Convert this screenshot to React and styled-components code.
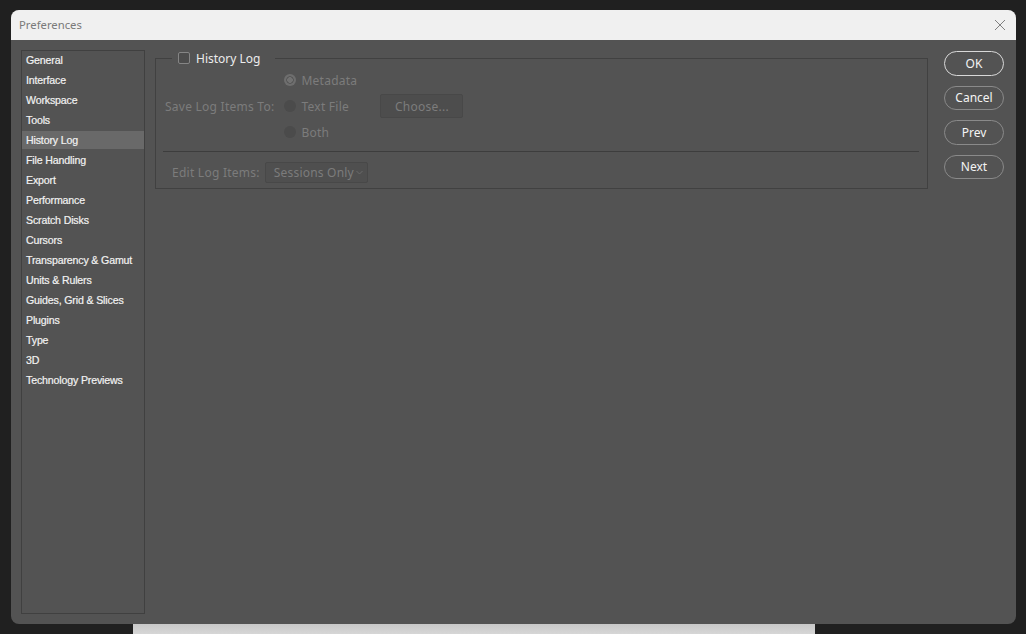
import React from "react";
import styled, { createGlobalStyle } from "styled-components";

const Global = createGlobalStyle`
  html, body { margin: 0; padding: 0; background: #202020; }
  body { font-family: "Noto Sans", "Liberation Sans", sans-serif; }
  * { box-sizing: border-box; }
`;

const Page = styled.div`
  width: 1026px;
  height: 634px;
  padding: 10px 0 0 11px;
  overflow: hidden;
  display: flex;
  flex-direction: column;
`;

const Window = styled.div`
  width: 1005px;
  height: 614px;
  flex: none;
  border-radius: 8px;
  overflow: hidden;
  background: #535353;
  display: flex;
  flex-direction: column;
  position: relative;
  z-index: 1;
`;

const Behind = styled.div`
  margin-left: 122px;
  width: 682px;
  height: 10px;
  flex: none;
  background: linear-gradient(#c8c8c8, #d6d6d6);
`;

const TitleBar = styled.div`
  height: 30px;
  flex: none;
  background: #f0f0f0;
  display: flex;
  align-items: center;
  justify-content: space-between;
  padding: 0 10px 1px 8px;
`;

const Title = styled.span`
  font-family: "Noto Sans", sans-serif;
  font-size: 11.3px;
  color: #7a7a7a;
`;

const Close = styled.svg`
  width: 12px;
  height: 12px;
`;

const Body = styled.div`
  flex: 1;
  display: flex;
  padding: 10px 12px 10px 10px;
`;

const Sidebar = styled.ul`
  list-style: none;
  margin: 0;
  padding: 0;
  width: 124px;
  flex: none;
  border: 1px solid #404040;
  display: flex;
  flex-direction: column;
  gap: 2px;
`;

const Item = styled.li`
  height: 18px;
  line-height: 18px;
  padding-left: 4px;
  font-family: "Liberation Sans", "DejaVu Sans", sans-serif;
  font-size: 10.6px;
  color: #f2f2f2;
  background: ${(p) => (p.$active ? "#696969" : "transparent")};
  letter-spacing: -0.15px;
  -webkit-text-stroke: 0.2px #f2f2f2;
`;

const Main = styled.div`
  flex: none;
  margin-left: 10px;
`;

const Group = styled.fieldset`
  margin: 0;
  width: 773px;
  height: 139px;
  border: 1px solid #414141;
  padding: 0;
  display: flex;
  flex-direction: column;
`;

const Legend = styled.legend`
  margin-left: 16px;
  padding: 0 15px 0 6px;
  display: flex;
  align-items: center;
  gap: 6px;
  height: 16px;
`;

const Check = styled.span`
  width: 12px;
  height: 12px;
  border: 1px solid #858585;
  border-radius: 2px;
  background: #4c4c4c;
  display: inline-block;
`;

const LegendText = styled.span`
  font-size: 12px;
  color: #ececec;
`;

const SaveRow = styled.div`
  display: flex;
  align-items: center;
  padding-left: 9px;
  margin-top: 8px;
`;

const Label = styled.span`
  font-size: 12px;
  letter-spacing: 0.25px;
  color: #7c7c7c;
  white-space: nowrap;
`;

const RadioList = styled.div`
  display: flex;
  flex-direction: column;
  gap: 14px;
  margin-left: 10px;
`;

const RadioRow = styled.div`
  display: flex;
  align-items: center;
  height: 12px;
  gap: 5px;
  width: 96px;
`;

const Radio = styled.span`
  width: 12px;
  height: 12px;
  border-radius: 50%;
  flex: none;
  background: ${(p) =>
    p.$on
      ? "radial-gradient(circle, #727272 0 2.6px, #585858 3px 3.6px, #6e6e6e 4px)"
      : "#4b4b4b"};
`;

const ChooseButton = styled.div`
  width: 83px;
  height: 24px;
  border: 1px solid #484848;
  border-radius: 2px;
  background: #4d4d4d;
  display: flex;
  align-items: center;
  justify-content: center;
  font-size: 12px;
  letter-spacing: 0.25px;
  color: #7c7c7c;
`;

const Separator = styled.div`
  height: 1px;
  background: #3d3d3d;
  margin: 13px 8px 0 7px;
`;

const EditRow = styled.div`
  display: flex;
  align-items: center;
  gap: 5px;
  padding-left: 16px;
  margin-top: 10px;
`;

const Select = styled.div`
  width: 103px;
  height: 21px;
  border: 1px solid #484848;
  border-radius: 2px;
  background: #4f4f4f;
  display: flex;
  align-items: center;
  padding-left: 8px;
  gap: 2px;
  font-size: 12px;
  letter-spacing: 0.2px;
  color: #7c7c7c;
`;

const Buttons = styled.div`
  margin-left: 16px;
  flex: none;
  display: flex;
  flex-direction: column;
  gap: 10px;
  padding-top: 1px;
`;

const Pill = styled.div`
  width: 60px;
  height: 24.5px;
  border-radius: 13px;
  border: ${(p) => (p.$primary ? "1.5px solid #d8d8d8" : "1px solid #8a8a8a")};
  display: flex;
  align-items: center;
  justify-content: center;
  font-size: 12px;
  color: #f4f4f4;
`;

const items = [
  "General",
  "Interface",
  "Workspace",
  "Tools",
  "History Log",
  "File Handling",
  "Export",
  "Performance",
  "Scratch Disks",
  "Cursors",
  "Transparency & Gamut",
  "Units & Rulers",
  "Guides, Grid & Slices",
  "Plugins",
  "Type",
  "3D",
  "Technology Previews",
];

export default function App() {
  return (
    <>
      <Global />
      <Page>
        <Window>
          <TitleBar>
            <Title>Preferences</Title>
            <Close viewBox="0 0 12 12">
              <path d="M1 1 L11 11 M11 1 L1 11" stroke="#808080" strokeWidth="1" fill="none" />
            </Close>
          </TitleBar>
          <Body>
            <Sidebar>
              {items.map((t) => (
                <Item key={t} $active={t === "History Log"}>
                  {t}
                </Item>
              ))}
            </Sidebar>
            <Main>
              <Group>
                <Legend>
                  <Check />
                  <LegendText>History Log</LegendText>
                </Legend>
                <SaveRow>
                  <Label>Save Log Items To:</Label>
                  <RadioList>
                    <RadioRow>
                      <Radio $on />
                      <Label>Metadata</Label>
                    </RadioRow>
                    <RadioRow>
                      <Radio />
                      <Label>Text File</Label>
                    </RadioRow>
                    <RadioRow>
                      <Radio />
                      <Label>Both</Label>
                    </RadioRow>
                  </RadioList>
                  <ChooseButton>Choose...</ChooseButton>
                </SaveRow>
                <Separator />
                <EditRow>
                  <Label>Edit Log Items:</Label>
                  <Select>
                    Sessions Only
                    <svg width="7" height="5" viewBox="0 0 7 5">
                      <path d="M0.5 1 L3.5 4 L6.5 1" stroke="#6a6a6a" fill="none" />
                    </svg>
                  </Select>
                </EditRow>
              </Group>
            </Main>
            <Buttons>
              <Pill $primary>OK</Pill>
              <Pill>Cancel</Pill>
              <Pill>Prev</Pill>
              <Pill>Next</Pill>
            </Buttons>
          </Body>
        </Window>
        <Behind />
      </Page>
    </>
  );
}
